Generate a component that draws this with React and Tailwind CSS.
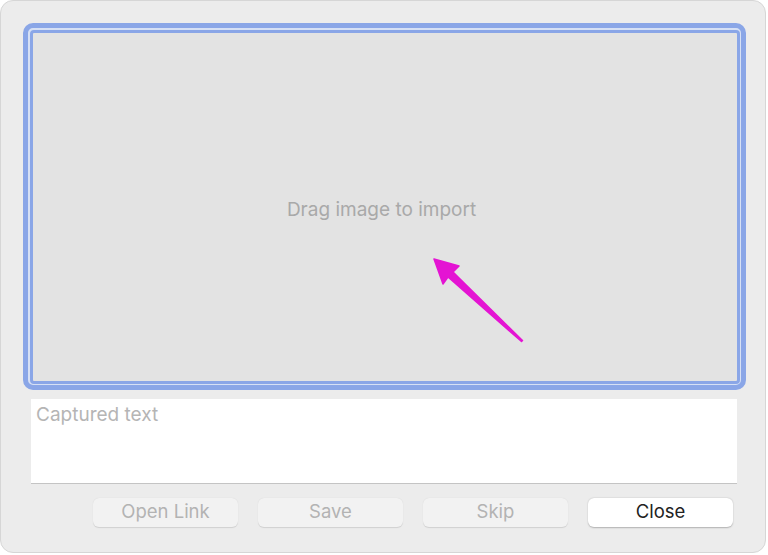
import React from "react";

const Button = ({ label, primary }) => (
  <button
    className={`w-[145px] h-[29px] pb-[2px] rounded-[6px] text-[18.5px] leading-none ${
      primary
        ? "bg-white text-[#222222] shadow-[0_0.5px_1.5px_rgba(0,0,0,0.25)]"
        : "bg-[#f2f2f2] text-[#b3b3b3] shadow-[0_0.5px_1px_rgba(0,0,0,0.12)]"
    }`}
  >
    {label}
  </button>
);

const App = () => {
  return (
    <div
      className="w-[768px] h-[555px] bg-white"
      style={{ fontFamily: "Inter, 'Liberation Sans', sans-serif" }}
    >
      <div className="relative w-[766px] h-[553px] bg-[#ececec] border border-[#d6d6d6] rounded-[13px] pt-[22px] pl-[22px]">
        <div className="w-[723px] h-[367px] border-[5px] border-[#8aa6e7] rounded-[10px] bg-[#d6e0f5] p-[1.5px]">
          <div className="w-full h-full border-[3px] border-[#8aa6e7] rounded-[4px] bg-[#e3e3e3] flex items-center justify-center">
            <span className="text-[19px] text-[#a9a9a9] mt-[7px] ml-[-6px]">
              Drag image to import
            </span>
          </div>
        </div>

        <div className="ml-[8px] mt-[9px] w-[706px] h-[85px] bg-white border-b border-[#c4c4c4] px-[5px] pt-[2px]">
          <span className="text-[19px] text-[#b5b5b5]">Captured text</span>
        </div>

        <div className="flex gap-[20px] ml-[70px] mt-[14px]">
          <Button label="Open Link" />
          <Button label="Save" />
          <Button label="Skip" />
          <Button label="Close" primary />
        </div>

        <svg
          className="absolute left-[-1px] top-[-1px] pointer-events-none"
          width="768"
          height="555"
          viewBox="0 0 768 555"
        >
          <polygon
            points="434,259 459,266 453,272 522.5,340.5 521.5,341.5 448,277 443,284"
            fill="#e414d3"
            stroke="#e414d3"
            strokeWidth="1.5"
            strokeLinejoin="round"
          />
        </svg>
      </div>
    </div>
  );
};

export default App;
